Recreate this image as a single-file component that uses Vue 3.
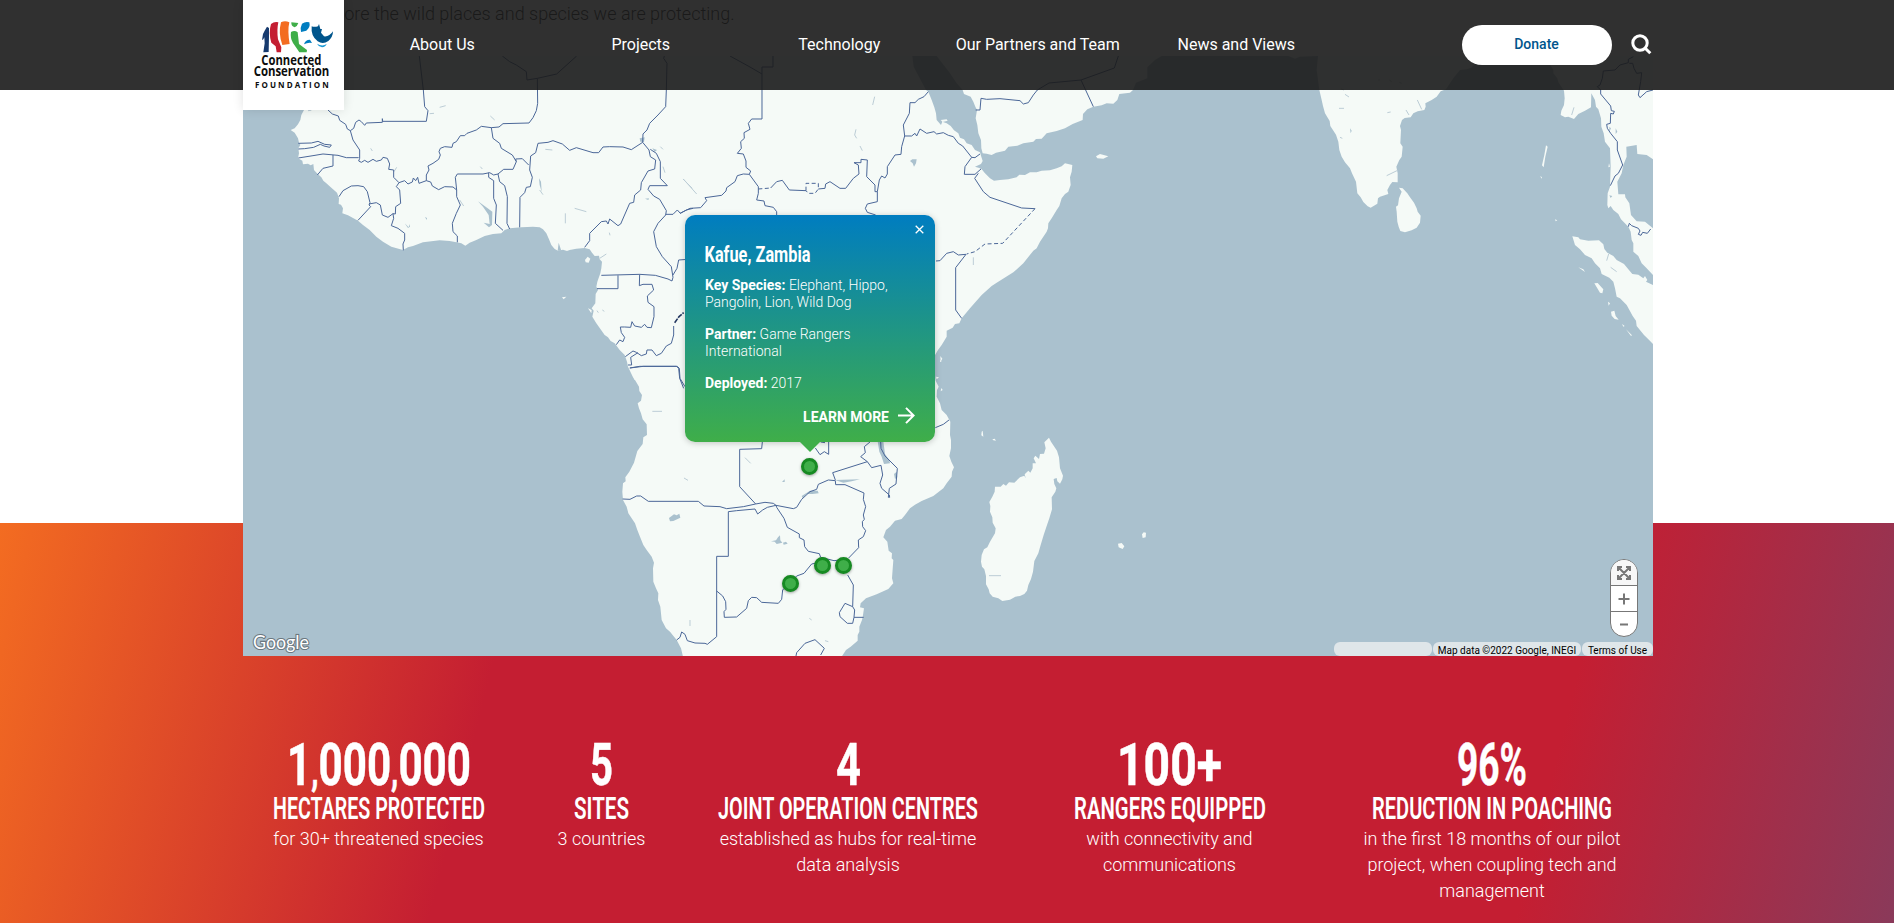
<script setup>
const nav = ['About Us', 'Projects', 'Technology', 'Our Partners and Team', 'News and Views']

const stats = [
  { value: '1,000,000', vw: 184, label: 'HECTARES PROTECTED', lw: 212, lines: ['for 30+ threatened species'] },
  { value: '5', vw: 23, label: 'SITES', lw: 55, lines: ['3 countries'] },
  { value: '4', vw: 25, label: 'JOINT OPERATION CENTRES', lw: 260, lines: ['established as hubs for real-time', 'data analysis'] },
  { value: '100+', vw: 105, label: 'RANGERS EQUIPPED', lw: 192, lines: ['with connectivity and', 'communications'] },
  { value: '96%', vw: 70, label: 'REDUCTION IN POACHING', lw: 240, lines: ['in the first 18 months of our pilot', 'project, when coupling tech and', 'management'] },
]

const markers = [
  { x: 809.7, y: 466.7 },
  { x: 822.7, y: 565.8 },
  { x: 843.7, y: 565.8 },
  { x: 790.7, y: 583.8 },
]
</script>

<template>
  <div class="page">
    <header class="header">
      <div class="header-inner">
        <a class="logo">
          <svg viewBox="0 0 303 330" width="101" height="110">
            <path fill="#173a6e" d="M72 80 L78 84 78 110 77 156 61 157 65 130 64 112 61 118 57 120 60 102 65 92 Z" />
            <path fill="#c41e32" d="M84 72 Q94 64 106 67 Q101 90 105 118 L115 142 114 157 101 157 98 139 85 128 Q76 98 84 72 Z" />
            <path fill="#f36c21" d="M114 67 Q126 61 139 67 Q133 92 140 132 L118 135 Q105 100 114 67 Z" />
            <path fill="#3fae49" d="M145 67 L166 69 Q163 79 155 82 Q144 79 145 67 Z M144 96 Q155 89 164 97 L168 132 192 150 191 157 169 157 164 149 150 129 Q141 114 144 96 Z" />
            <path fill="#007dc0" d="M177 71 Q188 63 199 67 Q203 82 190 92 L174 96 Q171 82 177 71 Z M183 133 Q186 119 201 119 L207 129 Q195 126 183 133 Z" />
            <path fill="#00558c" d="M206 79 Q214 82 225 79 L228 72 232 87 237 87 234 98 243 109 Q259 111 270 94 Q270 111 256 123 Q240 134 224 124 Q203 109 206 79 Z" />
            <path fill="#1b9ad6" d="M222 131 Q238 141 251 132 Q248 141 237 142 Q226 140 222 131 Z" />
            <g font-family="'Open Sans', sans-serif" font-weight="700" fill="#0d0d0d">
              <text x="55" y="196" font-size="40" textLength="180" lengthAdjust="spacingAndGlyphs">Connected</text>
              <text x="32" y="229" font-size="41" textLength="227" lengthAdjust="spacingAndGlyphs">Conservation</text>
              <text x="36" y="264" font-size="24" textLength="221" lengthAdjust="spacing">FOUNDATION</text>
            </g>
          </svg>
        </a>
        <nav class="nav">
          <a v-for="item in nav" :key="item">{{ item }}</a>
        </nav>
        <a class="donate">Donate</a>
        <svg class="search" viewBox="0 0 21 21" width="21" height="21">
          <circle cx="9" cy="9" r="7.2" />
          <path d="M14 14 L19.3 19.3" />
        </svg>
      </div>
    </header>

    <p class="intro">Explore the wild places and species we are protecting.</p>

    <div class="map">
      <svg class="map-canvas" viewBox="243 56 1410 600" width="1410" height="600">
        <rect x="243" y="56" width="1410" height="600" fill="#aac1ce" />

        <g fill="#f5faf7">
          <!-- West Africa -->
          <path transform="translate(243 90) scale(.33333)" d="M190-110 L183 60 175 75 172 90 165 103 155 115 143 120 155 128 165 145 168 158 172 165 166 175 168 190 165 205 178 212 180 223 195 221 203 226 211 222 213 240 222 250 235 262 241 272 250 280 265 293 282 308 288 325 287 342 294 344 300 355 298 370 315 376 345 392 360 405 380 420 400 440 420 455 445 470 480 480 495 472 510 468 540 457 565 454 590 451 620 453 640 457 655 460 667 467 680 458 700 450 725 438 750 432 775 430 785 420 800 415 835 412 870 410 890 412 900 418 910 430 918 448 925 465 935 477 945 482 960 479 972 483 980 480 1000 476 1025 474 1040 478 1047 488 1055 498 1068 497 1070 508 1077 515 1075 535 1072 550 1063 575 1060 590 1065 600 1058 612 1057 640 1046 655 1052 662 1048 680 1060 700 1085 735 1095 742 1103 753 1115 760 1130 780 1145 795 1152 815 1155 830 1170 862 1175 870 1400 870 1400 -110Z" />
          <path transform="translate(243 90) scale(.33333)" d="M1034 500 L1042 506 1037 518 1028 517 1026 510Z M957 622 L970 620 962 628Z M1035 655 L1046 660 1045 670Z" />
          <!-- East Africa and Arabia -->
          <path transform="translate(680 90) scale(.33333)" d="M-60-110 H696 L701-70 738 0 745 5 755 30 763 52 768 70 770 90 783 105 787 95 800 100 812 108 822 121 835 130 840 143 852 148 860 160 875 165 885 180 900 187 903 197 908 213 903 222 885 230 898 234 905 238 915 250 930 265 942 272 960 270 985 268 1010 262 1018 254 1035 255 1050 247 1070 247 1085 242 1110 241 1130 235 1145 229 1155 220 1177 225 1175 245 1170 262 1172 285 1165 305 1155 312 1145 325 1138 348 1130 360 1115 385 1105 400 1104 415 1100 425 1080 455 1070 475 1060 482 1030 520 1000 547 950 578 935 588 905 615 870 655 845 685 838 700 825 702 818 713 800 722 800 740 785 765 774 780 762 800 762 900 -60 900Z M782 90 L788 96 803 92 800 88Z M1248 199 L1260 192 1285 199 1270 206 1252 205Z M781 798 L787 806 782 815Z" />
          <path transform="translate(680 90) scale(.33333)" d="M770-102 L810-50 830-20 848 0 852 12 872 20 880 35 886 50 891 60 887 85 892 105 895 130 903 150 904 175 908 190 920 191 935 195 948 188 975 182 985 170 1012 167 1030 160 1060 155 1068 147 1085 146 1100 130 1130 123 1155 115 1178 102 1208 90 1209 72 1222 58 1240 50 1265 46 1280 40 1300 41 1312 30 1318 12 1350 8 1359 0 1368-22 1402-35 1402-68 1425-90 1445-102Z" />
          <!-- Southern Africa -->
          <path transform="translate(580 360) scale(.33333)" d="M156 38 L165 60 177 80 178 93 186 105 183 122 173 130 177 145 183 160 188 178 200 193 201 225 190 232 188 252 172 273 162 308 148 335 136 352 137 364 129 370 127 395 129 420 140 440 145 460 165 490 172 510 180 530 190 555 200 570 215 590 222 608 219 625 220 665 228 685 235 700 234 720 241 740 245 780 258 805 270 815 290 840 303 865 309 890 785 890 798 870 812 860 833 842 833 825 838 815 838 800 846 780 848 772 852 745 840 742 842 730 858 715 890 703 925 687 940 670 936 655 940 600 935 595 936 580 926 572 922 545 910 532 918 510 930 500 945 482 965 477 975 465 990 445 1005 434 1025 423 1060 408 1090 385 1100 370 1115 350 1116 335 1122 322 1114 305 1108 288 1113 265 1113 240 1110 225 1111 185 1100 165 1085 150 1080 130 1070 110 1071 90 1076 80 1067 62 1064 40 600 20Z M1080 0 L1085 4 1080 6Z M1084 84 L1088 90 1082 94Z M1068 50 L1077 52 1070 58Z" />
          <!-- Madagascar and neighbouring islands -->
          <path transform="translate(960 380) scale(.33333)" d="M267 173 L273 185 283 200 291 212 297 232 300 265 309 287 307 298 300 311 292 304 290 294 281 297 283 312 289 325 286 335 275 352 276 388 268 415 260 438 251 465 242 495 235 520 223 543 219 575 213 597 205 615 201 632 193 642 180 648 166 650 150 659 127 663 115 655 98 650 89 640 86 628 78 613 78 588 73 568 66 560 63 545 65 525 72 508 82 502 90 485 105 460 107 445 98 428 97 412 90 395 91 378 88 366 97 350 104 335 105 320 122 320 130 312 138 317 147 307 163 308 180 292 193 287 197 295 194 283 205 272 211 278 218 265 218 250 228 250 221 235 226 227 237 237 240 222 252 221 257 205 253 187Z M65 155 L68 152 70 170 64 166Z M97 178 L104 176 108 182 100 181Z M474 491 L485 489 493 499 488 507 476 502Z M551 457 L558 458 557 472 548 474 546 463Z" />
          <!-- India, Sri Lanka, South-East Asia -->
          <path transform="translate(1270 50) scale(.33333)" d="M-100 10 V18 L55 18 75 26 90 20 144 18 140 60 148 120 155 150 159 168 165 190 179 213 181 228 198 254 205 275 208 300 215 320 225 337 240 355 246 370 258 395 262 430 272 442 280 456 293 469 302 473 322 461 324 445 330 440 355 432 352 420 360 405 367 396 383 397 383 370 379 350 388 330 395 320 398 290 391 280 393 240 390 228 396 210 404 204 422 202 430 190 443 184 463 180 467 170 466 160 485 150 500 140 512 124 528 118 550 85 570 60 590 58 604 53 612 45 640 18 V-20Z" />
          <path transform="translate(1270 50) scale(.33333)" d="M387 413 L398 415 412 430 420 442 432 458 440 475 443 485 452 497 450 518 440 533 425 541 405 547 391 543 386 530 382 515 380 485 378 470 384 466 387 445 395 425Z" />
          <path transform="translate(1270 50) scale(.33333)" d="M825 18 L850 60 850 70 862 85 865 97 882 122 884 145 882 165 874 182 872 195 885 202 895 200 912 207 925 192 945 182 963 172 964 130 975 150 978 170 985 178 993 205 994 230 1001 250 1005 275 1020 295 1022 350 1020 410 1013 430 1012 465 1015 475 1022 468 1030 480 1045 492 1053 508 1075 530 1082 545 1085 570 1090 580 1090 605 1105 618 1115 640 1130 655 1149 675 1149 535 1125 515 1100 514 1083 495 1078 460 1066 442 1065 433 1045 433 1042 395 1055 370 1060 345 1070 320 1069 290 1100 285 1102 312 1130 315 1149 328 1152 0Z" />
          <path transform="translate(1270 50) scale(.33333)" d="M907 559 L925 562 930 568 955 572 987 571 1000 583 1003 597 1012 608 1030 618 1040 630 1062 642 1075 658 1087 672 1105 674 1120 685 1125 678 1132 690 1128 695 1149 705 1149 882 1135 868 1122 855 1100 828 1098 812 1088 798 1070 765 1050 745 1040 740 1035 715 1030 695 1018 683 995 672 990 655 975 640 965 625 945 615 930 598 915 585Z M925 652 L945 666 940 658Z M973 700 L983 699 1000 718 997 730 990 728Z M1023 785 L1033 782 1037 798 1046 809 1034 807 1025 797Z M1014 755 L1020 760 1016 767Z M1056 822 L1064 828 1060 830Z M1068 838 L1086 856 1083 858Z M828 286 L833 290 826 320 821 352 816 346 823 315Z M811 378 L816 382 814 386Z M855 508 L862 511 857 514Z M1017 340 L1020 350 1015 352Z" />
        </g>

        <!-- Lakes and rivers -->
        <g fill="#aac1ce" stroke="none">
          <path transform="translate(680 90) scale(.33333)" d="M690 213 L697 208 710 208 708 220 702 230 698 220Z" />
          <path transform="translate(580 360) scale(.33333)" d="M267 474 L282 463 290 466 298 461 301 473 280 483 270 484Z M573 544 L588 541 594 532 600 526 601 541 607 548 590 552 584 545Z M609 548 L618 545 623 551 611 554Z M893 244 L910 244 915 282 928 300 930 310 912 312 905 290 898 275Z M942 342 L950 335 952 352 945 357Z M765 360 L840 358 815 364 790 368Z M665 408 L690 392 713 392 716 400 697 402 680 402 668 415Z M606 366 L614 358 614 366Z" />
          <path transform="translate(243 90) scale(.33333)" d="M722 398 L740 402 737 375 720 350 705 334 733 354 748 365 747 405 738 412Z M888 265 L894 275 896 305 890 285Z M1190 145 L1205 142 1203 156 1192 155Z M1228 175 L1242 180 1235 186Z M947 458 L955 482 944 482Z M485 400 L497 412 501 402 501 410 495 414Z M546 381 L552 384 551 390Z M1206 326 L1218 325 1216 330Z" />
          <path transform="translate(1270 50) scale(.33333)" d="M240 235 L245 242 242 250Z M1018 230 L1023 235 1018 245Z M1037 235 L1042 245 1037 252Z M1018 436 L1027 438 1022 444Z" />
        </g>
        <g class="rivers">
          <path transform="translate(243 90) scale(.33333)" d="M590 52 L608 47 M560 71 L573 70 M742 78 L755 90 M383 175 L388 183 M907 178 L928 180 M890 300 L900 314 M995 355 L1030 365 M967 370 V400 M1070 505 L1090 492 M712 230 L718 237 M650 330 L662 348 M1260 230 L1266 248 M1320 267 L1348 295 M1062 662 L1066 668 M1078 660 L1084 664 M453 245 L461 232 M195 62 L205 61 M1099 428 L1101 436 M1252 170 L1260 178" />
          <path transform="translate(680 90) scale(.33333)" d="M584 20 L578 45 M528 118 L524 135 530 145 M540 168 L547 182 M880 502 V525 M10 267 L50 312" />
          <path transform="translate(580 360) scale(.33333)" d="M217 154 H246 M495 293 L512 310 M312 354 L324 361 M1227 647 H1263 M330 780 V798 M688 775 L695 780 M735 842 L745 845" />
          <path transform="translate(1270 50) scale(.33333)" d="M225 133 L237 141 M207 175 H222 M210 262 L217 265 M352 188 L362 186 M408 180 L417 195 M442 150 L455 178 M350 377 L383 361 M912 172 L905 195 M1016 612 L1010 632 M1022 652 L1040 665 M325 90 H330 M358 90 L365 95 M388 97 L395 100 M213 117 L222 120" />
        </g>

        <!-- Country borders -->
        <g class="borders">
          <path transform="translate(243 90) scale(.33333)" d="M529-102 L541 0 545 50 555 62 550 94 419 94 418 86 418 97 370 99 365 106 355 95 348 90 338 97 332 115 322 122 313 117 308 103 290 91 286 78 268 72 255 60
            M1001-102 L941-48 883-35 852-30 850-55 820-75 800-85 778-102 M883-35 L884 40 880 62 870 83 858 99 780 101 768 111 745 113 715 109 700 120 672 130 665 137 652 137 640 155 630 160 627 172 605 170 592 175 588 185 592 195 587 208 570 220 555 228 558 240 550 255 550 272
            M1264-102 L1262-95 1272-80 1270 0 1268 50 1245 75 1220 100 1212 120 1200 132 1199 157 1165 179 1140 171 1100 170 1080 171 1067 188 1050 188 1000 173 980 181 958 162 930 152 915 157 885 160 878 188 863 198 860 240 868 262 862 290 850 292 845 308 831 322 830 412
            M322 122 L330 150 350 180 350 205 347 213 355 217 365 211 375 217 390 208 400 214 415 210 420 202 433 205 440 222 437 238 452 240 452 262 468 278 485 272 495 282 508 276 511 264 518 272 524 262 528 280 550 272 563 276 568 288 587 299 605 290 630 291 641 300 641 320 652 345 640 370 628 400 630 425 643 438 643 457
            M641 300 L637 262 643 252 720 252 740 248 752 255 765 252 782 238 810 238 820 215 808 195 775 175 770 160 750 145 745 113
            M737 248 L737 262 752 272 752 325 760 345 757 400 780 421
            M765 252 L770 275 785 287 793 320 792 400 800 417
            M820 215 L818 207 838 206 857 225
            M166 160 L205 159 225 154 245 163 265 165 260 172 243 168 232 163 212 172 185 176 166 177
            M166 204 L210 197 240 192 285 196 310 203 347 203 M270 195 L270 228 240 235 223 255
            M288 320 L300 302 325 288 345 287 362 290 373 305 381 338 378 345 383 350 345 391
            M378 342 L400 338 412 345 418 375 435 382 450 371 457 372 458 350 473 340 470 300 460 290 468 278 M450 371 L452 385 445 407 465 415 485 430 485 450 480 462 481 481
            M1025 472 L1040 452 1040 430 1075 395 1090 393 1095 402 1100 387 1125 407 1133 402 1160 340 1172 337 1175 315 1193 300 1195 278 1215 243 1235 237 1238 210 1222 200 1218 180 1199 157
            M1222 178 L1240 190 1252 215 1252 265 1273 287 1220 287 1215 298 1232 318 1250 328 1270 362 1268 375 1245 400 1232 425 1240 470 1258 500 1285 530 1290 562 1287 573 1275 567 1237 556 1190 553 1075 556
            M1268 373 L1290 373 1303 360 1312 370 1330 360 1350 355 M1290 555 L1302 535 1307 510 1350 507
            M1062 596 H1125 V556 M1190 553 L1189 587 1200 583 1227 583 1232 600 1213 618 1215 637 1233 650 1233 680 1225 713 1212 712 1205 703 1195 712 1175 708 1167 695 1163 712 1145 711 1132 711 1135 728 1145 742 1140 755 1130 750 1120 764
            M1147 800 L1170 783 1180 787 1195 797 1210 792 1212 780 1227 780 1240 797 1255 790 1270 768 1285 760 1292 735 1292 708
            M1185 788 L1163 802 1166 825 1155 825 M1160 834 L1190 829 1300 829 1307 835 1310 865 1322 895" />
          <path class="thick" transform="translate(243 90) scale(.33333)" d="M1295 698 L1308 680 1322 668" />
          <path transform="translate(680 90) scale(.33333)" d="M150-102 L210-69 246-48 M246-48 V-69 H279 V-102 M246-48 V87 H215 L205 100 210 118 192 128 193 145 182 155 184 175 172 190 190 192 198 213 198 232 212 243 208 253 190 252 172 257 165 275 140 293 138 303 125 316 75 323 80 332 62 353 30 355 0 370
            M208 253 L235 290 235 310 230 330 252 333 255 347 280 352 290 365 290 378
            M272 294 L290 275 307 271 328 300 378 302 M415 297 L435 295 437 282 450 275 480 295 497 295 520 265 537 252 535 225 522 218 543 218 543 208 562 210 560 260 585 285 585 305 592 305 598 270 605 258 615 264 622 252 622 230 645 195 663 193 665 170 674 138 670 105 688 70 690 38 705 38 715 28 732 20 745 5
            M592 305 L592 335 562 342 556 355 562 367 587 375
            M674 138 L695 138 705 130 710 138 720 117 740 130 762 125 770 132 790 128 805 136 820 140 835 160 848 168 875 202 885 203 900 192 M875 202 L855 230 853 253 885 253 903 237 M895 250 L884 265 910 305 930 322 1025 354 1065 356
            M768 513 L780 512 800 490 820 485 835 495 858 493 827 533 827 660 845 685
            M887 60 L900 60 903 25 920 28 960 26 1020 32 1030 42 1045 38 1060 15 1072 0 1107-21 1203-30 1303-66 1315-102 M1203-30 L1240 50" />
          <path class="dash" transform="translate(680 90) scale(.33333)" d="M235 297 L272 294 M378 302 V280 H415 V297 L405 310 H385 L378 302 M1065 356 L968 460 915 462 885 485 860 492" />
          <path transform="translate(580 360) scale(.33333)" d="M150 24 L190 19 292 19 298 25 300 55 315 80
            M547 246 L545 266 479 268 479 380 527 432
            M128 417 L150 418 170 408 182 408 205 424 355 424 372 438 420 440 440 446 490 440 527 432 555 427 580 430 588 436 640 446 650 442 665 418 690 395 710 388 715 373 745 360 766 362 M766 362 L767 374 795 374 852 399 850 418 857 440 850 465 853 478 847 485 848 500 857 512 850 530 835 540 836 563 805 595
            M766 360 L758 338 862 305 M870 246 L853 260 856 278 842 290 862 305 875 323 903 316 908 345 900 370 905 385 928 405 929 412 925 412 928 385 948 372 952 325 915 288 903 265 902 246
            M706 264 L720 284 733 275 746 283 746 246 M722 246 L735 248
            M445 589 V455 L470 452 525 447 533 462 548 450 562 442 588 436 590 442 612 475 622 502 658 522 658 533 672 540 674 560 685 574 718 581 722 592 762 602 800 598
            M445 589 H410 V830 L382 853 375 850 345 849 322 842 315 823 305 816 300 832 290 840
            M410 693 L428 708 437 725 438 748 432 755 433 772 470 771 500 745 505 722 515 712 530 713 545 727 595 730 605 718 608 690 650 648 672 640 695 612 705 610
            M803 645 L820 675 818 740 795 730 778 758 780 770 802 790 818 790 822 772 824 750 818 740 M822 772 H851
            M648 888 L650 878 675 850 705 839 733 865 722 885 M1066 203 L1090 193 1107 180" />
          <path transform="translate(1270 50) scale(.33333)" d="M1090 20 L1075 28 1075 38 1050 45 1035 60 1000 63 997 85 990 105 982 110 992 120 992 132 1022 168 1024 182 1033 184 1030 192 1022 190 1021 220 1010 223 1012 235 1022 250 1042 275 1042 300 1058 345 1045 370 1035 378 1021 407
            M1078 40 L1088 40 1092 55 1100 70 1115 68 1112 95 1105 135 1110 143 1130 125 1149 120
            M1075 530 L1078 520 1085 527 1105 535 1110 543 1105 553 1113 556 1118 547 1132 550 1142 537" />
        </g>
      </svg>

      <span
        v-for="(m, i) in markers"
        :key="i"
        class="marker"
        :style="{ left: m.x - 243 + 'px', top: m.y - 56 + 'px' }"
      ></span>

      <div class="popup">
        <svg class="close" viewBox="0 0 9 9" width="9" height="9"><path d="M.7 .7 L8.3 8.3 M8.3 .7 L.7 8.3" /></svg>
        <svg class="popup-title" width="106" height="26">
          <text x="-.5" y="21.5" textLength="106" lengthAdjust="spacingAndGlyphs">Kafue, Zambia</text>
        </svg>
        <p><b>Key Species:</b> Elephant, Hippo,<br />Pangolin, Lion, Wild Dog</p>
        <p><b>Partner:</b> Game Rangers<br />International</p>
        <p><b>Deployed:</b> 2017</p>
        <a class="more">
          LEARN MORE
          <svg viewBox="0 0 17 17" width="17" height="17"><path d="M0 8.5 H15.5 M8 .9 L15.6 8.5 8 16.1" /></svg>
        </a>
      </div>

      <svg class="google" width="62" height="24">
        <text x="2" y="16" textLength="56" lengthAdjust="spacingAndGlyphs">Google</text>
      </svg>

      <div class="controls">
        <span>
          <svg viewBox="0 0 14 14" width="14" height="14">
            <path d="M2 2 L12 12 M12 2 L2 12 M1 5 V1 H5 M9 1 H13 V5 M13 9 V13 H9 M5 13 H1 V9" />
          </svg>
        </span>
        <span><svg viewBox="0 0 12 12" width="12" height="12"><path d="M.5 6 H11.5 M6 .5 V11.5" /></svg></span>
        <span><svg viewBox="0 0 12 12" width="12" height="12"><path d="M2 5.5 H10" /></svg></span>
      </div>

      <div class="credits">
        <span class="blank"></span>
        <span class="data">Map data ©2022 Google, INEGI</span>
        <span class="terms">Terms of Use</span>
      </div>
    </div>

    <section class="impact">
      <div class="stats">
        <div v-for="s in stats" :key="s.label" class="stat">
          <svg class="value" :width="s.vw" height="60">
            <text x="0" y="54" :textLength="s.vw" lengthAdjust="spacingAndGlyphs"><tspan v-for="(ch, i) in s.value" :key="i" :class="{ comma: ch === ',' }">{{ ch }}</tspan></text>
          </svg>
          <svg class="label" :width="s.lw" height="30">
            <text x="0" y="26" :textLength="s.lw" lengthAdjust="spacingAndGlyphs">{{ s.label }}</text>
          </svg>
          <div v-for="l in s.lines" :key="l" class="line">{{ l }}</div>
        </div>
      </div>
    </section>
  </div>
</template>

<style>
body {
  margin: 0;
  overflow: hidden;
}
</style>

<style scoped>
.page {
  position: relative;
  height: 923px;
  overflow: hidden;
  background: #fff;
  font-family: Roboto, sans-serif;
}
.header {
  position: absolute;
  z-index: 5;
  top: 0;
  left: 0;
  right: 0;
  height: 90px;
  background: rgba(26, 26, 26, 0.9);
}
.header-inner {
  display: flex;
  width: 1410px;
  height: 90px;
  margin-left: 243px;
}
.logo {
  width: 101px;
  height: 110px;
  background: #fff;
  box-shadow: 0 0 10px rgba(0, 0, 0, 0.12);
}
.logo svg {
  display: block;
}
.nav {
  display: grid;
  grid-template-columns: repeat(5, 198.5px);
  margin-left: -1px;
  line-height: 89px;
  text-align: center;
  font-size: 16px;
  color: #fff;
}
.donate {
  width: 150px;
  height: 40px;
  margin: 25px 0 0 126px;
  border-radius: 20px;
  background: #fff;
  color: #00558c;
  font-size: 14px;
  font-weight: 500;
  line-height: 39px;
  text-align: center;
}
.search {
  margin: 34px 0 0 19px;
  fill: none;
  stroke: #fff;
  stroke-width: 3;
}
.intro {
  box-sizing: border-box;
  width: 734.5px;
  height: 56px;
  margin: 0;
  line-height: 28px;
  font-size: 18px;
  font-weight: 300;
  text-align: right;
  color: #222;
}
.map {
  position: relative;
  z-index: 1;
  width: 1410px;
  height: 600px;
  margin-left: 243px;
}
.map-canvas {
  display: block;
}
.borders path {
  fill: none;
  stroke: #4b6798;
  stroke-width: 1;
  stroke-linejoin: round;
  vector-effect: non-scaling-stroke;
}
.borders .dash {
  stroke-dasharray: 4 2.5;
}
.borders .thick {
  stroke: #22355f;
  stroke-width: 1.6;
  stroke-dasharray: 5 1;
}
.rivers path {
  fill: none;
  stroke: #bccdd6;
  stroke-width: 1;
  vector-effect: non-scaling-stroke;
}
.marker {
  position: absolute;
  box-sizing: border-box;
  width: 17px;
  height: 17px;
  margin: -8.5px 0 0 -8.5px;
  border: 3px solid #168a22;
  border-radius: 50%;
  background: #3fae49;
  box-shadow: 0 1px 3px rgba(0, 0, 0, 0.35);
}
.popup {
  position: absolute;
  left: 442px;
  top: 159px;
  box-sizing: border-box;
  width: 250px;
  height: 227px;
  padding: 25px 20px 0 20px;
  border-radius: 10px;
  background: linear-gradient(180deg, #007dc0, #3fae49);
  box-shadow: 0 1px 6px rgba(0, 0, 0, 0.22);
  color: #fff;
  font-size: 14px;
  line-height: 17px;
}
.popup::after {
  content: '';
  position: absolute;
  left: 115px;
  bottom: -10px;
  border: 10px solid transparent;
  border-top-color: #3fae49;
  border-bottom: 0;
}
.popup p {
  margin: 0 0 15px;
  font-weight: 300;
}
.popup p b {
  font-weight: 700;
}
.popup-title {
  display: block;
  margin-bottom: 11px;
  overflow: visible;
  fill: #fff;
  font-size: 22.5px;
  font-weight: 700;
}
.close {
  position: absolute;
  right: 11px;
  top: 10px;
  fill: none;
  stroke: #fff;
  stroke-width: 1.3;
}
.more {
  display: flex;
  justify-content: flex-end;
  gap: 9px;
  margin-top: 17px;
  font-weight: 700;
}
.more svg {
  margin-top: -2.5px;
  fill: none;
  stroke: #fff;
  stroke-width: 2;
}
.google {
  position: absolute;
  left: 8px;
  top: 577px;
  overflow: visible;
  fill: #fff;
  stroke: #6b7880;
  stroke-width: 2.2;
  paint-order: stroke;
  font-family: Lato, sans-serif;
  font-size: 18.5px;
}
.controls {
  position: absolute;
  left: 1367px;
  top: 503px;
  box-sizing: border-box;
  width: 28px;
  height: 78px;
  border: 1px solid #777;
  border-radius: 14px;
  background: #fff;
  overflow: hidden;
}
.controls span {
  display: flex;
  box-sizing: border-box;
  height: 26px;
  padding-right: 1px;
  align-items: center;
  justify-content: center;
  border-bottom: 1px solid #777;
}
.controls span:first-child {
  background: #f7f7f7;
}
.controls span:last-child {
  border: 0;
}
.controls svg {
  fill: none;
  stroke: #777;
  stroke-width: 2;
}
.credits {
  position: absolute;
  right: 0;
  bottom: 0;
  display: flex;
  gap: 1px;
  height: 14px;
  color: #000;
  font-size: 10px;
  line-height: 17px;
  text-align: center;
  white-space: nowrap;
}
.credits span {
  border-radius: 6px;
  background: rgba(245, 245, 245, 0.7);
}
.blank {
  width: 98px;
}
.data {
  width: 148px;
}
.terms {
  width: 71px;
}
.impact {
  height: 400px;
  margin-top: -133px;
  background: linear-gradient(104deg, #f36c21 0%, #c41e32 26.5%, #c41e32 81%, #873b5c 101%);
}
.stats {
  display: grid;
  grid-template-columns: 271px 175px 318px 325px 320px;
  width: 1409px;
  margin-left: 243px;
  padding-top: 208px;
  text-align: center;
  color: #fff;
}
.stat {
  display: flex;
  flex-direction: column;
  align-items: center;
}
.value {
  overflow: visible;
  fill: #fff;
  stroke: #fff;
  stroke-width: 0.5;
  font-size: 60px;
  font-weight: 700;
}
.comma {
  font-size: 42px;
}
.label {
  margin-top: 2px;
  overflow: visible;
  fill: #fff;
  font-size: 30.5px;
  font-weight: 600;
}
.line {
  position: relative;
  top: 3px;
  line-height: 26px;
  font-size: 18px;
  font-weight: 300;
  white-space: nowrap;
}
</style>
